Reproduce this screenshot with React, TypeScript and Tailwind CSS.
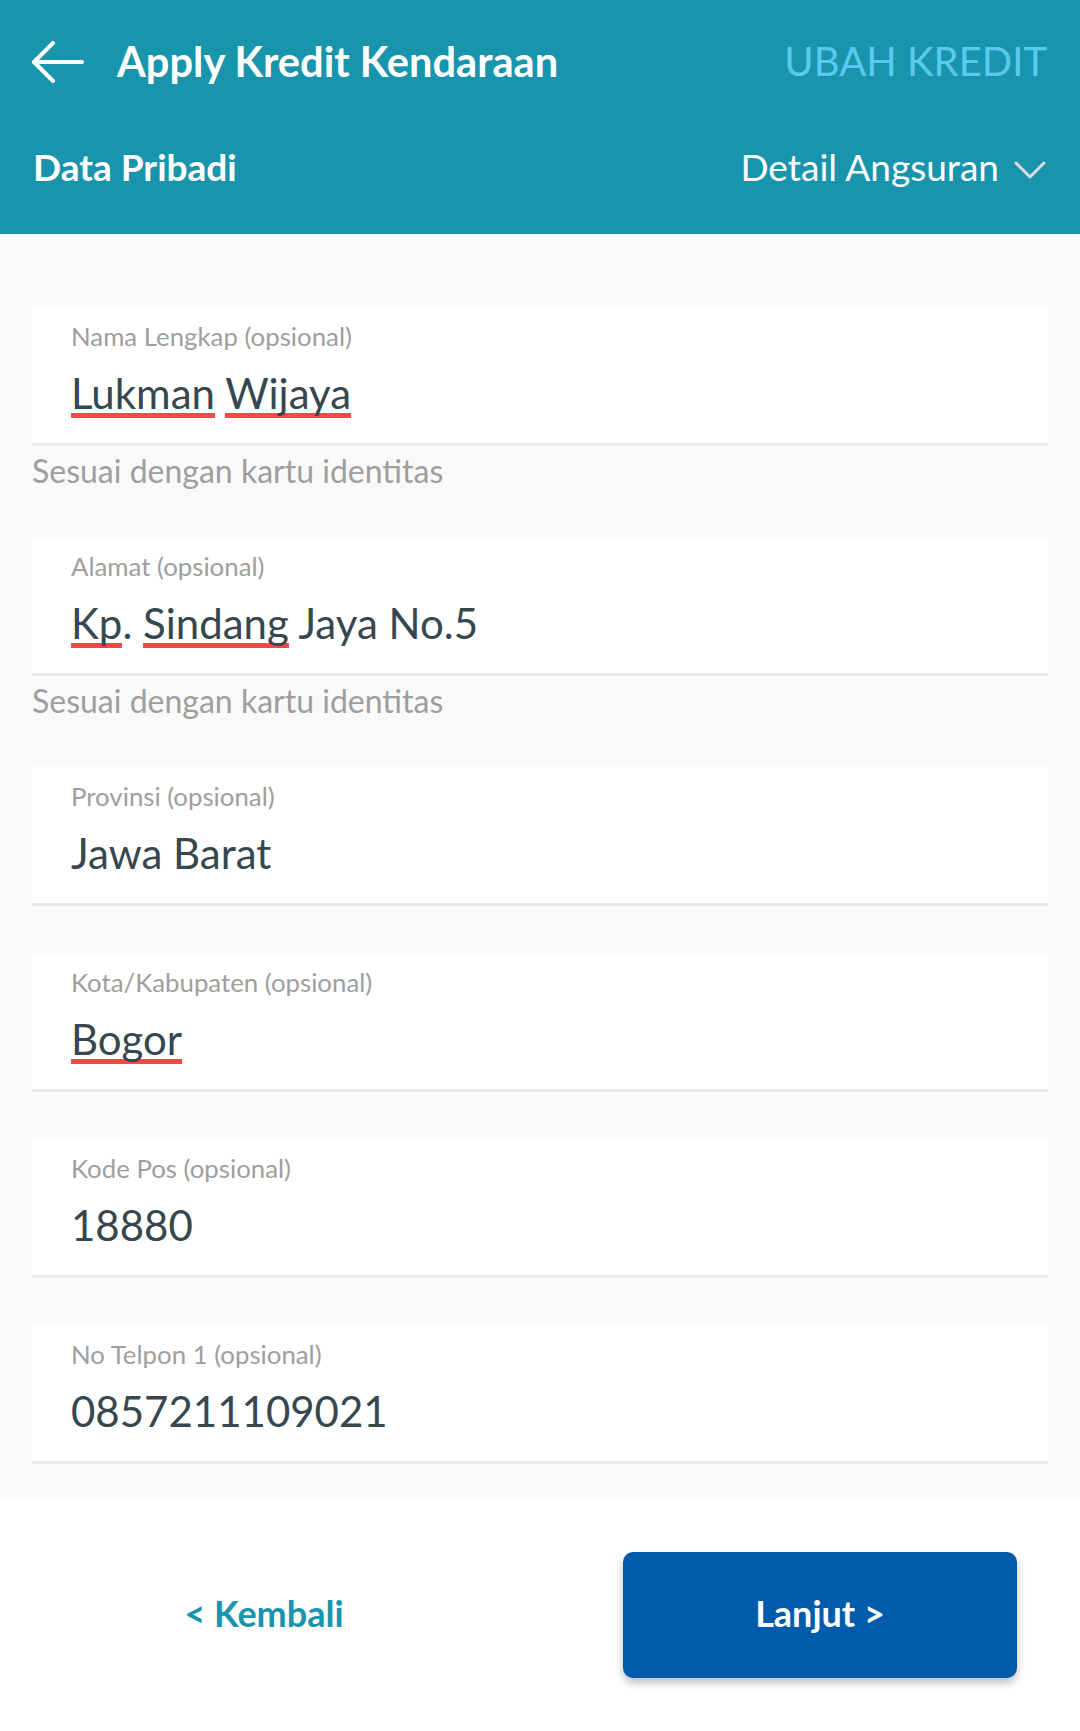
import type { ReactNode } from "react";

type Field = {
  label: string;
  value: ReactNode;
  hint?: string;
};

// red spellcheck squiggle under a word
function Typo({ children }: { children: ReactNode }) {
  return (
    <span className="bg-[linear-gradient(#ff4545,#ff4545)] bg-bottom bg-no-repeat bg-[length:100%_5px]">
      {children}
    </span>
  );
}

const FIELDS: Field[] = [
  {
    label: "Nama Lengkap (opsional)",
    value: (
      <>
        <Typo>Lukman</Typo> <Typo>Wijaya</Typo>
      </>
    ),
    hint: "Sesuai dengan kartu identitas",
  },
  {
    label: "Alamat (opsional)",
    value: (
      <>
        <Typo>Kp</Typo>. <Typo>Sindang</Typo> Jaya No.5
      </>
    ),
    hint: "Sesuai dengan kartu identitas",
  },
  { label: "Provinsi (opsional)", value: "Jawa Barat" },
  { label: "Kota/Kabupaten (opsional)", value: <Typo>Bogor</Typo> },
  { label: "Kode Pos (opsional)", value: "18880" },
  { label: "No Telpon 1 (opsional)", value: "0857211109021" },
];

function FieldCard({ field }: { field: Field }) {
  return (
    <div className="flex flex-col">
      <div className="border-b-[3px] border-[#ebebeb] bg-white pb-[25px] pl-[39px] pt-[14px]">
        <div className="text-[25.8px] leading-[31px] text-[#9e9e9e]">
          {field.label}
        </div>
        <div className="mt-[16px] whitespace-nowrap text-[42px] leading-[50px] text-[#37474f]">
          {field.value}
        </div>
      </div>
      {field.hint && (
        <div className="mt-[6px] text-[32px] leading-[38px] text-[#9e9e9e]">
          {field.hint}
        </div>
      )}
    </div>
  );
}

export default function App() {
  return (
    <div className="flex min-h-[1731px] w-[1080px] flex-col bg-white font-['Lato','Liberation_Sans',sans-serif]">
      <header className="flex h-[234px] flex-col bg-[#1895ac] px-[33px]">
        <div className="mt-[37px] flex h-[50px] items-center">
          <svg
            width="54"
            height="42"
            viewBox="0 0 54 42"
            fill="none"
            stroke="white"
            strokeWidth="4"
            strokeLinecap="round"
            strokeLinejoin="round"
            className="-ml-[1px]"
          >
            <path d="M2 21H50" />
            <path d="M21 2L2 21L21 40" />
          </svg>
          <h1 className="mb-[3px] ml-[31px] text-[41.6px] font-bold leading-[50px] text-white">
            Apply Kredit Kendaraan
          </h1>
          <button
            type="button"
            className="mb-[3px] ml-auto text-[40px] leading-[48px] text-[#5bc9ef]"
          >
            UBAH KREDIT
          </button>
        </div>
        <div className="mt-[58px] flex h-[44px] items-center">
          <div className="text-[37px] font-bold leading-[44px] text-white">
            Data Pribadi
          </div>
          <button
            type="button"
            className="ml-auto flex items-center text-[37px] leading-[44px] text-white"
          >
            Detail Angsuran
            <svg
              width="33"
              height="20"
              viewBox="0 0 33 20"
              fill="none"
              stroke="#dcdcdc"
              strokeWidth="3"
              strokeLinecap="round"
              strokeLinejoin="round"
              className="ml-[15px] mt-[6px]"
            >
              <path d="M2 3L16 17L30 3" />
            </svg>
          </button>
        </div>
      </header>

      <main className="flex flex-col gap-[47px] bg-[#f9f9f9] px-[32px] pb-[35px] pt-[73px]">
        {FIELDS.map((f) => (
          <FieldCard key={f.label} field={f} />
        ))}
      </main>

      <footer className="flex h-[232px] items-center justify-between pl-[67px] pr-[63px]">
        <button
          type="button"
          className="flex h-[126px] w-[394px] items-center justify-center pb-[4px] text-[36px] font-bold text-[#1895ac]"
        >
          &lt; Kembali
        </button>
        <button
          type="button"
          className="flex h-[126px] w-[394px] items-center justify-center rounded-[10px] bg-[#005baa] pb-[4px] text-[36px] font-bold text-white shadow-[0_5px_8px_rgba(0,0,0,0.25)]"
        >
          Lanjut &gt;
        </button>
      </footer>
    </div>
  );
}
